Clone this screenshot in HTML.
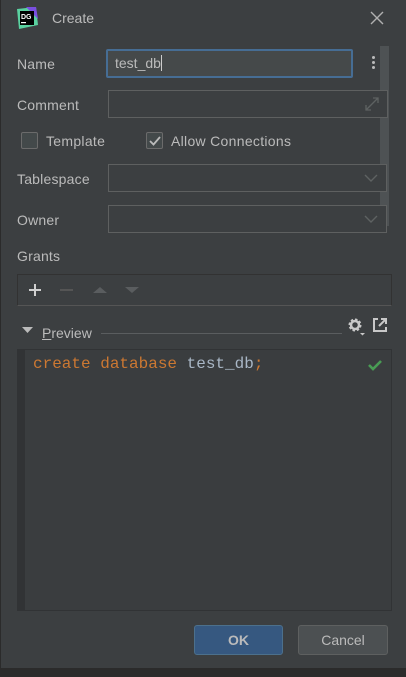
<!DOCTYPE html>
<html><head><style>
*{margin:0;padding:0;box-sizing:border-box}
body{width:406px;height:677px;background:#2b2b2b;font-family:"Liberation Sans",sans-serif;font-size:14px;color:#bbbbbb;position:relative;overflow:hidden}
.dlg{position:absolute;left:0;top:0;width:406px;height:668px;background:#3c3f41;box-shadow:inset 1px 0 0 #2b2b2b}
.a{position:absolute}
.lbl{position:absolute;left:17px;font-size:14px;color:#bbbbbb;letter-spacing:0.2px}
.fld{position:absolute;left:108px;width:279px;height:28px;border:1px solid #5e6060;background:#45494a}
.cb{position:absolute;width:17px;height:17px;border:1px solid #6b6b6b;border-radius:2px;background:#43494a}
</style></head><body>
<div class="dlg">
<svg class="a" style="left:16px;top:7px" width="22" height="22" viewBox="0 0 22 22"><polygon points="1,2 20,0 22,18 3,22" fill="#5ad1a0"/><polygon points="10,0 20,0 22,12" fill="#7a4fe0"/><rect x="4" y="4" width="14" height="14" fill="#000"/><text x="5" y="12" font-size="7" fill="#fff" font-family="Liberation Sans" font-weight="bold">DG</text><rect x="5" y="15" width="5" height="1.2" fill="#fff"/></svg>
<div class="a" style="left:52px;top:10px;font-size:14px">Create</div>
<svg class="a" style="left:370px;top:11px" width="14" height="14"><path d="M1 1L13 13M13 1L1 13" stroke="#b0b0b0" stroke-width="1.4"/></svg>
<div class="a" style="left:380px;top:46px;width:9px;height:180px;background:#4e5254"></div>
<div class="lbl" style="top:56px">Name</div>
<div class="a" style="left:106px;top:49px;width:247px;height:29px;border:2px solid #466d94;border-radius:2px;background:#45494a;padding:4px 7px;font-size:14px;color:#bbb">test_db<span style="display:inline-block;width:1px;height:16px;background:#ccc;vertical-align:-3px"></span></div>
<div class="a" style="left:372px;top:56px;width:3px;height:3px;background:#bbb;border-radius:2px;box-shadow:0 5px 0 #bbb,0 10px 0 #bbb"></div>
<div class="lbl" style="top:97px">Comment</div>
<div class="a" style="left:108px;top:90px;width:280px;height:28px;border:1px solid #5e6060;background:#3c3f41"></div>
<svg class="a" style="left:364px;top:96px" width="16" height="16"><path d="M2 14L14 2M9 2h5v5M2 9v5h5" stroke="#5e6262" stroke-width="1.3" fill="none"/></svg>
<div class="cb" style="left:21px;top:132px"></div>
<div class="a" style="left:46px;top:133px;letter-spacing:0.3px">Template</div>
<div class="cb" style="left:146px;top:132px"></div>
<svg class="a" style="left:148px;top:134px" width="14" height="14"><path d="M2 7l3.5 3.5L12 3" stroke="#bbb" stroke-width="1.8" fill="none"/></svg>
<div class="a" style="left:171px;top:133px;letter-spacing:0.3px">Allow Connections</div>
<div class="lbl" style="top:171px">Tablespace</div>
<div class="fld" style="top:164px;background:#3c3f41"></div>
<svg class="a" style="left:364px;top:173px" width="14" height="10"><path d="M1 2l6 6 6-6" stroke="#5e6262" stroke-width="1.4" fill="none"/></svg>
<div class="lbl" style="top:212px">Owner</div>
<div class="fld" style="top:205px;background:#3c3f41"></div>
<svg class="a" style="left:364px;top:214px" width="14" height="10"><path d="M1 2l6 6 6-6" stroke="#5e6262" stroke-width="1.4" fill="none"/></svg>
<div class="lbl" style="top:248px">Grants</div>
<div class="a" style="left:17px;top:274px;width:375px;height:32px;border:1px solid #323232;border-bottom:1px solid #555;background:#3c3f41"></div>
<svg class="a" style="left:27px;top:283px" width="120" height="14"><path d="M8 1v12M2 7h12" stroke="#d0d0d0" stroke-width="2"/><path d="M33 7h13" stroke="#555" stroke-width="2"/><path d="M66 10l7-6 7 6z" fill="#5a5d5f"/><path d="M98 4l7 6 7-6z" fill="#5a5d5f"/></svg>
<svg class="a" style="left:22px;top:327px" width="12" height="8"><path d="M0 0h11l-5.5 6z" fill="#bbb"/></svg>
<div class="a" style="left:42px;top:325px"><u>P</u>review</div>
<div class="a" style="left:101px;top:333px;width:241px;height:1px;background:#5a5d5f"></div>
<svg class="a" style="left:346px;top:316px" width="20" height="20"><circle cx="9" cy="9" r="5" fill="none" stroke="#c8c8c8" stroke-width="3" stroke-dasharray="2.2 1.7"/><circle cx="9" cy="9" r="4" fill="none" stroke="#c8c8c8" stroke-width="2.5"/><path d="M14 17h5l-2.5 2.5z" fill="#c8c8c8"/></svg>
<svg class="a" style="left:372px;top:317px" width="16" height="16"><path d="M6 2H2v12h12v-4" stroke="#c8c8c8" stroke-width="2" fill="none"/><path d="M7 9l6-6M9 2h5v5" stroke="#c8c8c8" stroke-width="2" fill="none"/></svg>
<div class="a" style="left:17px;top:349px;width:375px;height:262px;background:#3a3d3f;border:1px solid #313335"></div>
<div class="a" style="left:18px;top:350px;width:7px;height:260px;background:#313335"></div>
<div class="a" style="left:33px;top:355px;font-family:'Liberation Mono',monospace;font-size:16px;color:#cc7832;white-space:pre">create database <span style="color:#a9b7c6">test_db</span>;</div>
<svg class="a" style="left:367px;top:358px" width="16" height="14"><path d="M2 7l4 4 8-8" stroke="#499c54" stroke-width="2.6" fill="none"/></svg>
<div class="a" style="left:194px;top:625px;width:89px;height:30px;background:#365880;border:1px solid #4c708c;border-radius:3px;text-align:center;line-height:28px;font-weight:bold;color:#bbb">OK</div>
<div class="a" style="left:298px;top:625px;width:90px;height:30px;background:#4c5052;border:1px solid #5e6060;border-radius:3px;text-align:center;line-height:28px;color:#bbb">Cancel</div>
</div>
</body></html>
